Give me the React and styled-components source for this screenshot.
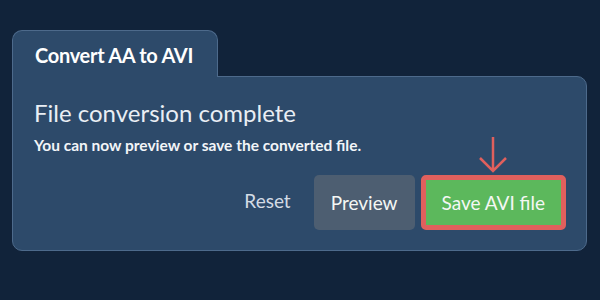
import React from "react";
import styled, { createGlobalStyle } from "styled-components";

const GlobalStyle = createGlobalStyle`
  html, body {
    margin: 0;
    padding: 0;
    background: #11233a;
    font-family: Lato, "Open Sans", sans-serif;
  }
`;

const Page = styled.div`
  width: 600px;
  height: 300px;
  box-sizing: border-box;
  padding: 30px 13px 0 12px;
  background: #11233a;
`;

const TabBar = styled.div`
  display: flex;
  position: relative;
  z-index: 1;
  margin-bottom: -1px;
`;

const Tab = styled.div`
  width: 206px;
  height: 47px;
  box-sizing: border-box;
  padding: 12px 0 0 22px;
  background: #2d4a6a;
  border: 1px solid #4d6a8b;
  border-bottom: none;
  border-radius: 10px 10px 0 0;
  color: #ffffff;
  font-weight: 700;
  font-size: 20px;
  letter-spacing: -0.3px;
`;

const Panel = styled.div`
  height: 175px;
  box-sizing: border-box;
  padding: 21px 20px 20px 21px;
  background: #2d4a6a;
  border: 1px solid #4d6a8b;
  border-radius: 0 10px 10px 10px;
  display: flex;
  flex-direction: column;
`;

const Heading = styled.h2`
  margin: 0;
  font-weight: 400;
  font-size: 24px;
  line-height: 30px;
  color: #e9eef4;
`;

const Note = styled.p`
  margin: 8px 0 0;
  font-weight: 700;
  font-size: 15.5px;
  line-height: 18px;
  color: #f2f5f8;
`;

const Actions = styled.div`
  margin-top: auto;
  display: flex;
  justify-content: flex-end;
  align-items: center;
  gap: 6px;
`;

const LinkButton = styled.button`
  background: none;
  border: none;
  padding: 0 17px 4px 0;
  font-family: inherit;
  font-size: 19px;
  color: #d3dbe5;
`;

const Button = styled.button`
  height: 55px;
  box-sizing: border-box;
  padding: 0 ${(p) => p.$pad}px;
  border-radius: 5px;
  font-family: inherit;
  font-size: 19px;
  color: #f4f7f4;
  background: ${(p) => (p.$primary ? "#5cb85c" : "#4d5e71")};
  border: ${(p) => (p.$primary ? "5px solid #e0605d" : "none")};
`;

const Highlight = styled.div`
  position: relative;
`;

const Pointer = styled.svg`
  position: absolute;
  left: 57px;
  top: -39px;
`;

export default function App() {
  return (
    <>
      <GlobalStyle />
      <Page>
        <TabBar>
          <Tab>Convert AA to AVI</Tab>
        </TabBar>
        <Panel>
          <Heading>File conversion complete</Heading>
          <Note>You can now preview or save the converted file.</Note>
          <Actions>
            <LinkButton>Reset</LinkButton>
            <Button $pad={17}>Preview</Button>
            <Highlight>
              <Pointer width="30" height="38" viewBox="0 0 30 38">
                <path
                  d="M15 1 V35 M2 22 L15 35 L28 22"
                  fill="none"
                  stroke="#e0605d"
                  strokeWidth="2.5"
                />
              </Pointer>
              <Button $primary $pad={16}>Save AVI file</Button>
            </Highlight>
          </Actions>
        </Panel>
      </Page>
    </>
  );
}
